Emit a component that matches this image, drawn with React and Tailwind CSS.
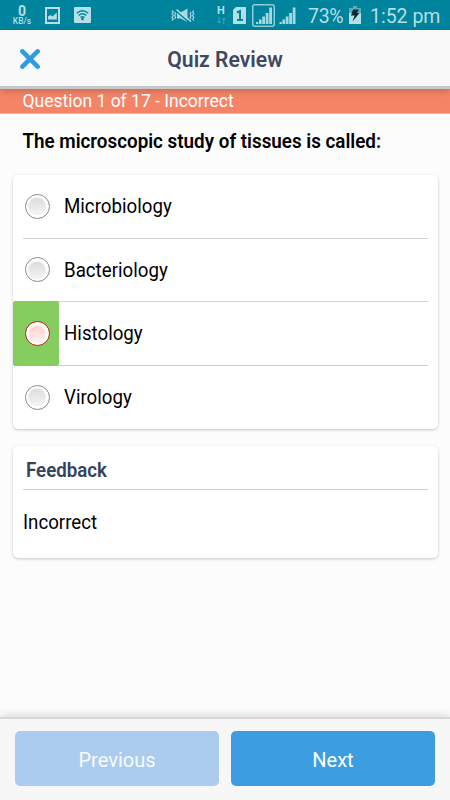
import React from 'react'

const options = [
  { label: 'Microbiology' },
  { label: 'Bacteriology' },
  { label: 'Histology', correct: true, picked: true },
  { label: 'Virology' },
]

function ImageIcon(){
  return (
    <svg className="ml-[13px] h-[17px] w-[15px]" viewBox="0 0 15 17" fill="none">
      <rect x="1" y="1" width="13" height="15" stroke="#b5dfe6" strokeWidth="2" />
      <path d="M3 12.5V9.5L5.5 8L7.5 9.5L11.8 5.5V12.5Z" fill="#b5dfe6" />
    </svg>
  )
}

function WifiBoxIcon(){
  return (
    <svg className="ml-[14px] h-4 w-[17px]" viewBox="0 0 17 16" fill="none">
      <rect width="17" height="16" rx="1" fill="#b5dfe6" />
      <g stroke="#00839d" strokeWidth="1.4">
        <path d="M2.8 6.2Q8.5 1.2 14.2 6.2" />
        <path d="M4.7 8.4Q8.5 5 12.3 8.4" />
        <path d="M6.5 10.5Q8.5 8.8 10.5 10.5" />
      </g>
      <circle cx="8.5" cy="12" r="1.3" fill="#00839d" />
    </svg>
  )
}

function VibrateMuteIcon(){
  return (
    <svg className="h-[15px] w-6" viewBox="0 0 24 15" fill="none">
      <path d="M6 4.5H9.5L16.5 .5V14L9.5 10.5H6Z" fill="#a5d8e1" />
      <path d="M5 3L19 15" stroke="#00839d" strokeWidth="1.5" />
      <path d="M5.5 1.5L20 13.5" stroke="#b5dfe6" strokeWidth="1.6" />
      <path d="M1 2.5L2.3 4L1 5.5L2.3 7.5L1 9.5L2.3 11L1 12.5M3.7 4L4.6 5.5L3.7 7.5L4.6 9.5L3.7 11M20 4L19.2 5.5L20 7.5L19.2 9.5L20 11M22.8 2.5L21.6 4L22.8 5.5L21.6 7.5L22.8 9.5L21.6 11L22.8 12.5" stroke="#a5d8e1" strokeWidth="1.2" />
    </svg>
  )
}

function SignalIcon({ boxed }){
  return (
    <svg className={boxed ? 'ml-[6px] h-[23px] w-[23px]' : 'ml-[3px] h-[23px] w-[19px]'} viewBox={boxed ? '0 0 23 23' : '2.5 0 19 23'} fill="none">
      {boxed && <rect x=".75" y=".75" width="21.5" height="21.5" rx="2" stroke="#8fccd8" strokeWidth="1.5" />}
      <path d="M4 18H6.3V20H4ZM7 15.5H9.6V20H7ZM10.3 12.5H13V20H10.3ZM13.7 9H16.5V20H13.7ZM17.2 3.5H20V20H17.2Z" fill="#a5d8e1" />
    </svg>
  )
}

function BatteryIcon(){
  return (
    <svg className="ml-[5px] h-[18px] w-3" viewBox="0 0 12 18">
      <path d="M0 2H4V0H8V2H12V18H0Z" fill="#b5dfe6" />
      <path d="M0 2H4V0H8V2H12V7H0Z" fill="#58acbc" />
      <path d="M4 3.5L9.8 3.5L8 7H10.5L3.5 15.5L5.6 9.5H2Z" fill="#082c36" />
    </svg>
  )
}

function StatusBar(){
  return (
    <div className="flex h-[30px] items-center bg-[#00839d] text-[#b5dfe6]">
      <div className="ml-[12px] flex w-5 flex-col items-center pt-[1px]">
        <span className="text-[14px] font-bold leading-[12px]">0</span>
        <span className="text-[8.5px] font-medium leading-[9px]">KB/s</span>
      </div>
      <ImageIcon />
      <WifiBoxIcon />
      <div className="ml-auto flex items-center">
        <VibrateMuteIcon />
        <div className="ml-[21px] flex w-[10px] flex-col items-center">
          <span className="text-[11px] font-bold leading-[10px]">H</span>
          <svg className="mt-px h-[7px] w-[9px]" viewBox="0 0 9 7" fill="none" stroke="#4ca8b9">
            <path d="M2.2 0V6M.5 4.2L2.2 6L3.9 4.2M6.8 7V1M5.1 2.8L6.8 1L8.5 2.8" />
          </svg>
        </div>
        <svg className="ml-[7px] h-[17px] w-[13px]" viewBox="0 0 13 17" fill="none">
          <path d="M3 0H13V17H0V3Z" fill="#b5dfe6" />
          <path d="M4 5.5L7 4V13M4 13H10" stroke="#00839d" strokeWidth="2" />
        </svg>
        <SignalIcon boxed />
        <SignalIcon />
        <span className="ml-[11px] w-[36px] origin-left scale-x-95 whitespace-nowrap pt-0.5 text-[20.5px] leading-[28px] tracking-[-0.3px]">73%</span>
        <BatteryIcon />
        <span className="ml-[9px] mr-[10px] w-[70px] origin-left scale-x-95 whitespace-nowrap pt-0.5 text-[20.5px] leading-[28px]">1:52 pm</span>
      </div>
    </div>
  )
}

function Radio({ picked }){
  return (
    <span className={picked
      ? 'flex size-[25px] items-center justify-center rounded-full border-[1.5px] border-[#b71c1c] bg-white'
      : 'flex size-[25px] items-center justify-center rounded-full border-[1.3px] border-[#8c8c8c] bg-white'}>
      <span className={picked
        ? 'size-[18px] rounded-full border border-[#fff1ee] bg-linear-to-b from-[#ffd3cb] to-[#fff1ee]'
        : 'size-[18px] rounded-full border border-[#eeeeee] bg-linear-to-b from-[#dcdcdc] to-[#f4f4f4]'} />
    </span>
  )
}

function Option({ option, last }){
  return (
    <div className="flex h-[63.8px] first:h-[62.7px]">
      <div className={option.correct
        ? 'z-10 flex h-[65px] w-[46px] items-center justify-center rounded-[2px] bg-[#84cd5e] pl-[3px]'
        : 'flex w-[46px] items-center justify-center pl-[3px]'}>
        <Radio picked={option.picked} />
      </div>
      <div className="relative flex flex-1 items-center pl-[5px] text-[20px]">
        <span className="origin-left scale-x-[.935]">{option.label}</span>
        {!last && <span className={option.correct ? 'absolute -bottom-px left-0 right-[10px] h-px bg-[#cfcfcf]' : 'absolute -bottom-px -left-[36px] right-[10px] h-px bg-[#d4d4d4]'} />}
      </div>
    </div>
  )
}

export default function App(){
  return (
    <div className="flex h-[800px] w-[450px] flex-col overflow-hidden bg-[#fcfcfc] font-[Roboto,sans-serif] text-black">
      <StatusBar />

      <header className="relative flex h-[59px] items-center border-b-[3px] border-[#c8c8c8] bg-[#f9f9f9] shadow-[0_2px_7px_rgba(0,0,0,0.2)]">
        <svg className="ml-5 mt-px size-5" viewBox="0 0 20 20" stroke="#2f9be4" strokeWidth="4.6" strokeLinecap="round">
          <path d="M2.4 2.4L17.6 17.6M17.6 2.4L2.4 17.6" />
        </svg>
        <h1 className="mr-10 flex-1 scale-x-[.96] pt-[3px] text-center text-[22px] font-semibold text-[#3f4a5e]">Quiz Review</h1>
      </header>

      <div className="h-[25px] border-b border-[#f9b5a3] bg-[#f58467] pl-[22.5px] text-[17.5px] leading-[24px] text-white">Question 1 of 17 - Incorrect</div>

      <main className="flex-1 px-[12.5px]">
        <h2 className="w-max origin-left scale-x-[.941] pl-[10px] pt-[14px] text-[20px] font-semibold leading-[26px]">The microscopic study of tissues is called:</h2>

        <section className="mt-[21px] h-[254px] rounded-[5px] bg-white shadow-[0_1px_3px_rgba(0,0,0,0.22)]">
          {options.map((option, i) => (
            <Option key={option.label} option={option} last={i === options.length - 1} />
          ))}
        </section>

        <section className="mt-[17px] h-[112px] rounded-[5px] bg-white px-[10px] shadow-[0_1px_3px_rgba(0,0,0,0.22)]">
          <h3 className="h-[44px] border-b border-[#cfcfcf] pl-[3.5px] leading-[49px] text-[#34435a]">
            <span className="inline-block origin-left scale-x-[.935] text-[20px] font-semibold">Feedback</span>
          </h3>
          <p className="origin-left scale-x-[.935] pt-[19px] text-[20px] leading-[26px]">Incorrect</p>
        </section>
      </main>

      <footer className="flex h-[83px] gap-3 border-t-2 border-[#d8d8d8] bg-[#f7f7f7] px-[15px] pt-3 shadow-[0_-2px_8px_rgba(0,0,0,0.13)]">
        <button className="h-[55px] flex-1 rounded-[5px] bg-[#abccef] pt-0.5 text-[20px] text-[#f8fbff]">Previous</button>
        <button className="h-[55px] flex-1 rounded-[5px] bg-[#3c9de1] pt-0.5 text-[20px] text-white">Next</button>
      </footer>
    </div>
  )
}
